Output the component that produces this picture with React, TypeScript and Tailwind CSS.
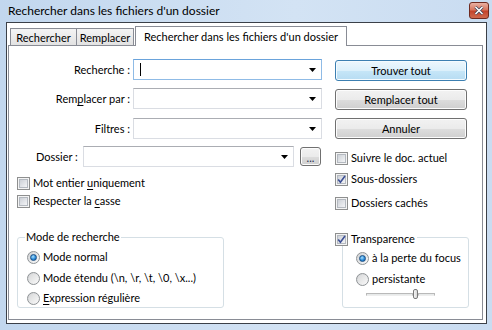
import type { ReactNode } from 'react';

function Checkbox({ checked = false }: { checked?: boolean }) {
  return (
    <span className="flex h-[13px] w-[13px] shrink-0 border border-[#8e8f8f] bg-[#f4f4f4] p-[1px]">
      <span className="relative flex-1 border border-[#b4b9c0] bg-[linear-gradient(135deg,#cdd1d7,#f3f4f6)]">
        {checked && (
          <svg className="absolute -left-[1px] -top-[1px]" width="9" height="9" viewBox="0 0 9 9">
            <path d="M1.2 4.6 L3.4 7.2 L8 1" fill="none" stroke="#3c4f94" strokeWidth="1.6" />
          </svg>
        )}
      </span>
    </span>
  );
}

function Radio({ checked = false }: { checked?: boolean }) {
  return (
    <span className="flex h-[13px] w-[13px] shrink-0 items-center justify-center rounded-full border border-[#8f9396] bg-[linear-gradient(135deg,#cfd1d3,#fbfbfb)]">
      {checked ? (
        <span className="h-[7px] w-[7px] rounded-full border border-[#1b4f84] bg-[radial-gradient(circle_at_40%_35%,#a9e1ff,#2a8ad8_55%,#0d5aa8)]" />
      ) : (
        <span className="h-[9px] w-[9px] rounded-full bg-[linear-gradient(135deg,#d9dadb,#f7f7f7)]" />
      )}
    </span>
  );
}

function Arrow() {
  return (
    <svg width="7" height="4" viewBox="0 0 7 4" className="shrink-0">
      <path d="M0 0 H7 L3.5 4 Z" fill="#000" />
    </svg>
  );
}

function Combo({ width, focused = false }: { width: string; focused?: boolean }) {
  return (
    <div
      className={
        focused
          ? `flex h-[21px] ${width} items-center border border-[#8fbbe6] border-t-[#6aa3db] bg-white pl-[6px] pr-[5px]`
          : `flex h-[21px] ${width} items-center border border-[#dadde3] border-t-[#abadb3] bg-white pl-[6px] pr-[5px]`
      }
    >
      <span className="flex-1">{focused && <span className="block h-[13px] w-px bg-black" />}</span>
      <Arrow />
    </div>
  );
}

function Button({ children, primary = false }: { children: ReactNode; primary?: boolean }) {
  return (
    <div
      className={
        primary
          ? 'flex h-[21px] w-[132px] items-center justify-center rounded-[3px] border border-[#3c7fb1] bg-[linear-gradient(to_bottom,#edf7fd,#dcf0fb_50%,#c6e6f8_51%,#b7dcf2)] shadow-[inset_0_0_0_1px_#f4fbff]'
          : 'flex h-[21px] w-[132px] items-center justify-center rounded-[3px] border border-[#707070] bg-[linear-gradient(to_bottom,#f2f2f2,#ebebeb_50%,#dddddd_51%,#cfcfcf)] shadow-[inset_0_0_0_1px_#fcfcfc]'
      }
    >
      {children}
    </div>
  );
}

function CheckRow({ checked, children }: { checked?: boolean; children: ReactNode }) {
  return (
    <div className="flex h-[18px] items-center gap-[3px]">
      <Checkbox checked={checked} />
      <span>{children}</span>
    </div>
  );
}

function RadioRow({ checked, children, className = '' }: { checked?: boolean; children: ReactNode; className?: string }) {
  return (
    <div className={`flex h-[16px] items-center gap-[3px] ${className}`}>
      <Radio checked={checked} />
      <span>{children}</span>
    </div>
  );
}

const U = ({ children }: { children: ReactNode }) => (
  <span className="underline decoration-1 underline-offset-[2px]">{children}</span>
);

export default function App() {
  return (
    <div className="flex h-[330px] w-[492px] flex-col bg-[linear-gradient(to_right,#c2d7ee,#d3e3f4_60%,#c9dcf1)] font-['Lato',sans-serif] text-[11px] leading-[16px] text-black">
      {/* title bar */}
      <div className="flex h-[22px] items-center justify-between pl-[8px] pr-[3px]">
        <span className="text-[12px]">Rechercher dans les fichiers d'un dossier</span>
        <div className="mb-[1px] flex h-[17px] w-[20px] items-center justify-center rounded-[3px] border border-[#6f2a20] bg-[linear-gradient(to_bottom,#e9b1a4,#d7765f_45%,#c4442c_55%,#cf6a4f)]">
          <svg width="10" height="9" viewBox="0 0 10 9">
            <path d="M1.5 1 L8.5 8 M8.5 1 L1.5 8" stroke="#3b3f55" strokeWidth="3" />
            <path d="M1.5 1 L8.5 8 M8.5 1 L1.5 8" stroke="#fff" strokeWidth="1.6" />
          </svg>
        </div>
      </div>

      {/* client area */}
      <div className="ml-[6px] h-[302px] w-[481px] border border-[#3b4048] bg-white pl-[1px] pt-[3px]">
        {/* tabs */}
        <div className="flex h-[19px] items-end pl-[2px]">
          <div className="flex h-[17px] w-[67px] items-center justify-center border border-b-0 border-[#898c95] bg-[linear-gradient(to_bottom,#f4f4f4,#e2e2e2)] pt-[1px]">
            Rechercher
          </div>
          <div className="flex h-[17px] w-[57px] items-center justify-center border border-b-0 border-l-0 border-[#898c95] bg-[linear-gradient(to_bottom,#f4f4f4,#e2e2e2)] pt-[1px]">
            Remplacer
          </div>
          <div className="relative z-10 -mb-px ml-[1px] flex h-[20px] w-[212px] items-center border border-b-0 border-[#898c95] bg-white pl-[8px]">
            Rechercher dans les fichiers d'un dossier
          </div>
        </div>

        {/* panel */}
        <div className="flex h-[275px] w-[475px] border border-[#898c95] bg-white">
          {/* left column */}
          <div className="flex w-[326px] flex-col pt-[13px]">
            <div className="flex items-center">
              <span className="w-[121px] text-right">Recherche :</span>
              <div className="ml-[3px]">
                <Combo width="w-[189px]" focused />
              </div>
            </div>
            <div className="mt-[8px] flex items-center">
              <span className="w-[121px] text-right">
                Rem<U>p</U>lacer par :
              </span>
              <div className="ml-[3px]">
                <Combo width="w-[189px]" />
              </div>
            </div>
            <div className="mt-[9px] flex items-center">
              <span className="w-[121px] text-right">Filtres :</span>
              <div className="ml-[3px]">
                <Combo width="w-[189px]" />
              </div>
            </div>
            <div className="ml-[27px] mt-[7px] flex items-center">
              <span className="w-[47px]">Dossier :</span>
              <Combo width="w-[211px]" />
              <div className="ml-[6px] flex h-[19px] w-[21px] items-end justify-center rounded-[3px] border border-[#707070] bg-[linear-gradient(to_bottom,#f2f2f2,#ebebeb_50%,#dddddd_51%,#cfcfcf)] pb-[1px] leading-[12px] text-[#1c2a4c] shadow-[inset_0_0_0_1px_#fcfcfc]">
                ...
              </div>
            </div>

            <div className="ml-[8px] mt-[7px]">
              <CheckRow>
                Mot entier <U>u</U>niquement
              </CheckRow>
              <CheckRow>
                Respecter la <U>c</U>asse
              </CheckRow>
            </div>

            <fieldset className="ml-[8px] mt-[19px] h-[79px] w-[207px] rounded-[3px] border border-[#d5dfe5]">
              <legend className="ml-[7px] px-[1px]">Mode de recherche</legend>
              <div className="pl-[9px]">
                <RadioRow checked className="mt-[4px]">
                  Mode normal
                </RadioRow>
                <RadioRow className="mt-[5px]">Mode étendu (\n, \r, \t, \0, \x...)</RadioRow>
                <RadioRow className="mt-[4px]">
                  <U>E</U>xpression régulière
                </RadioRow>
              </div>
            </fieldset>
          </div>

          {/* right column */}
          <div className="flex w-[134px] flex-col pt-[14px]">
            <Button primary>Trouver tout</Button>
            <div className="mt-[8px]">
              <Button>Remplacer tout</Button>
            </div>
            <div className="mt-[8px]">
              <Button>Annuler</Button>
            </div>
            <div className="mt-[10px]">
              <CheckRow>Suivre le doc. actuel</CheckRow>
            </div>
            <div className="mt-[3px]">
              <CheckRow checked>Sous-dossiers</CheckRow>
            </div>
            <div className="mt-[6px]">
              <CheckRow>Dossiers cachés</CheckRow>
            </div>

            <fieldset className="ml-[7px] mt-[17px] h-[79px] w-[127px] rounded-[3px] border border-[#d5dfe5]">
              <legend className="-ml-[8px] pr-[2px]">
                <span className="relative top-[2px] flex items-center gap-[3px]">
                  <Checkbox checked />
                  <span>Transparence</span>
                </span>
              </legend>
              <div className="pl-[13px]">
                <RadioRow checked className="mt-[5px]">
                  à la perte du focus
                </RadioRow>
                <RadioRow className="mt-[5px]">persistante</RadioRow>
                <div className="ml-[10px] mt-[2px] flex h-[10px] w-[69px] items-center">
                  <span className="h-[3px] w-[47px] border border-[#b9b9b9] border-b-[#eeeeee] bg-[#e7eaea]" />
                  <span className="h-[10px] w-[5px] shrink-0 rounded-[2px] border border-[#7a7a7a] bg-[linear-gradient(to_right,#f4f4f4,#d8d8d8)]" />
                  <span className="h-[3px] flex-1 border border-[#b9b9b9] border-b-[#eeeeee] bg-[#e7eaea]" />
                </div>
              </div>
            </fieldset>
          </div>
        </div>
      </div>
    </div>
  );
}
